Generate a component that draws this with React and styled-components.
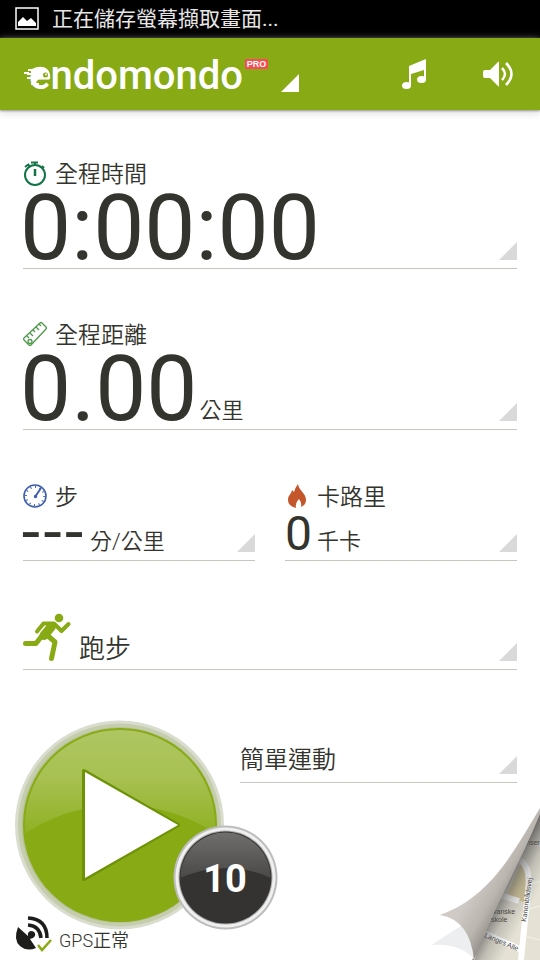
import React from "react";
import styled, { createGlobalStyle } from "styled-components";

const Global = createGlobalStyle`
  * { box-sizing: border-box; }
  html, body, #root { height: 100%; }
  body { margin: 0; background: #fff; color: #33342e; font-family: Roboto, "Noto Sans CJK TC", sans-serif; }
  button { border: 0; padding: 0; margin: 0; background: none; color: inherit; font: inherit; text-align: left; cursor: pointer; }
  svg { display: block; flex: none; overflow: visible; }
`;

const Screen = styled.div`
  position: relative;
  min-height: 100%;
  display: flex;
  flex-direction: column;
  overflow: hidden;
`;

const StatusBar = styled.div`
  height: 38px;
  padding: 0 15px;
  display: flex;
  align-items: center;
  gap: 12px;
  background: #000;
  color: #e6e6e6;
  font-size: 21px;
  line-height: 36px;
`;

const Header = styled.header`
  height: 72px;
  padding: 0 26px 0 22px;
  display: flex;
  align-items: center;
  background: #88aa14;
  box-shadow: 0 1px 2px #999, 0 3px 8px #ddd;
`;

const Brand = styled.button`
  display: flex;
  align-items: flex-end;
  height: 36px;
`;

const Pro = styled.span`
  align-self: flex-start;
  margin-top: 3px;
  width: 23px;
  border-radius: 1px;
  background: #f94b55;
  color: #fff;
  font: bold 9px/10px "Liberation Sans", sans-serif;
  text-align: center;
`;

const Corner = styled.span`
  flex: none;
  width: 18px;
  height: 18px;
  margin-left: ${(p) => p.$gap || "auto"};
  background: ${(p) => p.$color || "#d9d9d9"};
  clip-path: polygon(100% 0, 100% 100%, 0 100%);
`;

const Actions = styled.div`
  margin-left: auto;
  display: flex;
  align-items: center;
  gap: 56px;
`;

const Main = styled.main`
  flex: 1;
  padding: 0 23px;
  display: flex;
  flex-direction: column;
`;

const Pair = styled.div`
  display: grid;
  grid-template-columns: 1fr 1fr;
  gap: 30px;
`;

const Metric = styled.button`
  display: flex;
  flex-direction: column;
  justify-content: flex-end;
  width: 100%;
  height: ${(p) => p.$height};
  border-bottom: 1px solid #c6c6bc;
`;

const Label = styled.span`
  display: flex;
  align-items: flex-start;
  gap: 8px;
  height: 26px;
  font-size: 23px;
  font-weight: 350;
  line-height: 30px;
`;

const Reading = styled.span`
  display: flex;
  align-items: flex-end;
  width: 100%;
  height: ${(p) => p.$height};
  padding-bottom: 8px;
`;

const Value = styled.span`
  font-size: 48px;
  line-height: 36px;
  margin-right: 5px;
`;

const BigValue = styled(Value)`
  font-size: 91px;
  line-height: 64px;
  margin: 0 2px 0 -3px;
`;

const Dashes = styled(Value)`
  font-family: "DejaVu Sans", sans-serif;
  font-size: 60px;
  line-height: 44px;
  margin: 0 5px 0 -3px;
`;

const Unit = styled.span`
  font-size: ${(p) => p.$size || "22px"};
  font-weight: 350;
  line-height: ${(p) => p.$line || "20px"};
`;

const Sport = styled(Unit)`
  margin-left: 8px;
`;

const Footer = styled.div`
  display: flex;
  gap: 16px;
  margin: 50px 0 0 -8px;
`;

const StartArea = styled.div`
  position: relative;
  width: 209px;
`;

const Countdown = styled.button`
  position: absolute;
  left: 158px;
  top: 105px;
  width: 105px;
  height: 105px;
`;

const Gps = styled.div`
  position: relative;
  display: flex;
  align-items: flex-end;
  gap: 7px;
  width: 140px;
  margin: -18px 0 0 -8px;
  font-size: 18px;
  font-weight: 350;
  line-height: 22px;
`;

const MapPeel = styled.button`
  position: absolute;
  right: 0;
  bottom: 0;
`;

const Gallery = () => (
  <svg width="25" height="24" viewBox="0 0 25 24" aria-hidden="true">
    <rect x="1" y="1" width="22" height="21" fill="none" stroke="#fff" strokeWidth="1.5" />
    <path d="M3 19v-4l5-5 4 4 4-3 5 5v3z" fill="#fff" />
  </svg>
);

const Logo = () => (
  <svg width="223" height="36" viewBox="0 0 223 36" role="img" aria-label="endomondo">
    <text x="7" y="33" fill="#fff" fontFamily="Roboto" fontWeight="500" fontSize="40">endomondo</text>
    <path d="M10 13q10-5 16 1 3 4 2 9H17l-3 3h-3l-2-3H5v-2h5v-2H5v-2h4v-2H6v-2z" fill="#fff" />
    <path d="M2 17h5M9 28h8" stroke="#fff" strokeWidth="2" />
    <circle cx="23.500" cy="19" r="2.500" fill="#88aa14" />
    <circle cx="24" cy="18.500" r="1" fill="#fff" />
  </svg>
);

const Music = () => (
  <svg width="25" height="32" viewBox="0 0 25 32" aria-hidden="true">
    <path d="M7 8L24 1v21h-2V12L9 16v12H7z" fill="#fff" />
    <ellipse cx="4.500" cy="27.500" rx="4.500" ry="3.500" fill="#fff" />
    <ellipse cx="19.500" cy="21.500" rx="4.500" ry="3.500" fill="#fff" />
  </svg>
);

const Speaker = () => (
  <svg width="31" height="26" viewBox="0 0 31 26" aria-hidden="true">
    <path d="M2 9h5l8-8q1-1 1 0v24q0 1-1 0l-8-8H2q-2 0-2-2v-4q0-2 2-2z" fill="#fff" />
    <path d="M19 7q6 6 0 12M23 2q11 11 0 22" fill="none" stroke="#fff" strokeWidth="2.500" />
  </svg>
);

const Stopwatch = () => (
  <svg width="24" height="26" viewBox="0 0 24 26" aria-hidden="true" fill="none" stroke="#127447">
    <circle cx="12" cy="15" r="10" strokeWidth="2" />
    <path d="M8 2.500h7M12 3v3M2 7l4-3M5 4l2 3M19 6l2 2" strokeWidth="2" />
    <path d="M12 9v7" strokeWidth="2.500" />
  </svg>
);

const Ruler = () => (
  <svg width="24" height="26" viewBox="0 0 24 26" aria-hidden="true" fill="none" stroke="#4b9948" strokeWidth="1.3">
    <path d="M1 17L17 2q1-1 2 0l4 4q1 1 0 2L8 24q-1 1-2 0l-5-5q-1-1 0-2z" />
    <circle cx="7" cy="20.500" r="2" />
    <path d="M4 15l2 2M7 12l3 3M10 9l2 2M13 6l3 3M16 3l2 2" />
  </svg>
);

const Gauge = () => (
  <svg width="24" height="26" viewBox="0 -1 24 26" aria-hidden="true" fill="none" stroke="#3f5fae">
    <circle cx="12" cy="12" r="11" strokeWidth="1.6" />
    <circle cx="12" cy="12" r="9" strokeWidth="2" strokeDasharray="1 3.7" pathLength="56.4" />
    <path d="M12 13L18 4" strokeWidth="2" />
    <circle cx="12.500" cy="12.500" r="1" strokeWidth="1.500" />
  </svg>
);

const Flame = () => (
  <svg width="24" height="26" viewBox="0 -1 24 26" aria-hidden="true">
    <path d="M13 0C14 7 21 9 21 16q0 5-5 7 1-4-2-8-4 4-3 9-8-2-8-8c0-5 3-5 4-10l2 2q1-4 4-8z" fill="#c3562b" />
  </svg>
);

const Runner = () => (
  <svg width="48" height="48" viewBox="0 0 48 48" aria-hidden="true">
    <circle cx="36" cy="5" r="4.300" fill="#88aa14" />
    <g fill="none" stroke="#88aa14" strokeWidth="5" strokeLinecap="round" strokeLinejoin="round">
      <path d="M14 18.500L20.500 10.500H31L38.500 18 45.500 11" strokeWidth="4" />
      <path d="M18 24L13 30.500H2.500" />
      <path d="M24 22L32 29 28.500 45.500" />
      <path d="M28.500 13.500L21 22.500" strokeWidth="9" />
    </g>
  </svg>
);

const PlayArt = () => (
  <svg width="209" height="210" viewBox="0 0 209 210" aria-hidden="true">
    <defs>
      <linearGradient id="shine" x2="0" y2="1">
        <stop stopColor="#b0c767" /><stop offset=".5" stopColor="#a8c152" /><stop offset="1" stopColor="#8fb022" />
      </linearGradient>
      <clipPath id="disc"><circle cx="105" cy="105" r="95" /></clipPath>
    </defs>
    <circle cx="104.500" cy="105" r="104.500" fill="#d9ddcd" />
    <circle cx="104.500" cy="105" r="101.500" fill="#c5cdae" />
    <circle cx="104.500" cy="105" r="98" fill="#b6c394" />
    <circle cx="105" cy="105" r="97" fill="#88aa14" />
    <path d="M8 115V0h195v115q-45-30-98-30T8 115z" fill="url(#shine)" clipPath="url(#disc)" />
    <path d="M69 51v108l94-54z" fill="#fff" stroke="#6d9206" strokeWidth="4" strokeLinejoin="round" />
    <path d="M70 52v106l93-53z" fill="#fff" />
  </svg>
);

const CountArt = () => (
  <svg width="105" height="105" viewBox="0 0 105 105">
    <defs>
      <linearGradient id="gloss" x2="0" y2="1">
        <stop stopColor="#777573" /><stop offset="1" stopColor="#4a4846" />
      </linearGradient>
      <clipPath id="dial"><circle cx="52.500" cy="52.500" r="45" /></clipPath>
    </defs>
    <circle cx="52.500" cy="52.500" r="52" fill="#bdbdbd" />
    <circle cx="52.500" cy="52.500" r="50" fill="#f0f0f0" />
    <circle cx="52.500" cy="52.500" r="47" fill="#aaa" />
    <circle cx="52.500" cy="52.500" r="46" fill="#353331" />
    <path d="M5 54V0h95v54q-46-22-95 0z" fill="url(#gloss)" clipPath="url(#dial)" />
    <text x="52" y="67" textAnchor="middle" fontFamily="Roboto" fontWeight="700" fontSize="38" fill="#fff">10</text>
  </svg>
);

const Satellite = () => (
  <svg width="37" height="36" viewBox="0 0 37 36" aria-hidden="true">
    <path d="M3 11l10 9q-1-5 4-5 4 1 3 5-2 3-5 3l6 9q-9 4-16-2T3 11z" fill="#1d1d1b" />
    <path d="M13 9q12 1 13 13M13 2q19 1 19 20" fill="none" stroke="#1d1d1b" strokeWidth="3.500" />
    <path d="M23 29l4 5 9-10" fill="none" stroke="#fff" strokeWidth="5" />
    <path d="M23 29l4 5 9-10" fill="none" stroke="#88aa14" strokeWidth="2.500" />
  </svg>
);

const PeelArt = () => (
  <svg width="110" height="152" viewBox="0 0 110 152">
    <defs>
      <linearGradient id="fold" gradientUnits="userSpaceOnUse" x1="42" y1="82" x2="80" y2="104">
        <stop stopColor="#cfcac5" /><stop offset=".5" stopColor="#bbb5af" /><stop offset="1" stopColor="#827e79" />
      </linearGradient>
      <linearGradient id="shade" gradientUnits="userSpaceOnUse" x1="76" y1="72" x2="106" y2="88">
        <stop stopColor="#444" stopOpacity=".75" /><stop offset=".5" stopColor="#555" stopOpacity=".25" /><stop offset="1" stopColor="#555" stopOpacity="0" />
      </linearGradient>
      <clipPath id="map"><path d="M110 4L42 152h68z" /></clipPath>
    </defs>
    <g clipPath="url(#map)">
      <path d="M30 0h80v152H30z" fill="#e5e2d5" />
      <path d="M91 55l10 14-6 26-18-8z" fill="#d5c99c" />
      <path d="M70 87l19 6M90 52q11 7 8 30l-8 80M54 125l40 18" fill="none" stroke="#fff" strokeWidth="6" />
      <path d="M97 77l13-4M96 102l14-4M95 128l15 4M92 35l18 3" stroke="#f4f2e9" />
      <g fill="#45423d" fontFamily="Liberation Sans" fontSize="7">
        <text x="96" y="37">nser</text>
        <text x="63" y="106">vanske</text>
        <text x="61" y="114">skole</text>
        <text x="54" y="129" transform="rotate(23 54 129)">Langes Alle</text>
        <text x="96" y="114" transform="rotate(-82 96 114)">Kanonbådsvej</text>
      </g>
      <path d="M110 0L42 152h68z" fill="url(#shade)" />
    </g>
    <path d="M2 137q17-12 31-20 15 15 12 35-15-17-43-15z" fill="#eceeef" />
    <path d="M110 0C83 45 60 89 10 107q30 5 34 45C62 103 91 54 110 6z" fill="url(#fold)" />
  </svg>
);

export default function App() {
  return (
    <Screen>
      <Global />
      <StatusBar><Gallery /><span>正在儲存螢幕擷取畫面...</span></StatusBar>
      <Header>
        <Brand>
          <Logo /><Pro>PRO</Pro><Corner $color="#fff" $gap="13px" />
        </Brand>
        <Actions>
          <button aria-label="Music"><Music /></button>
          <button aria-label="Sound"><Speaker /></button>
        </Actions>
      </Header>
      <Main>
        <Metric $height="159px">
          <Label><Stopwatch />全程時間</Label>
          <Reading $height="82px"><BigValue>0:00:00</BigValue><Corner /></Reading>
        </Metric>
        <Metric $height="161px">
          <Label><Ruler />全程距離</Label>
          <Reading $height="82px"><BigValue>0.00</BigValue><Unit>公里</Unit><Corner /></Reading>
        </Metric>
        <Pair>
          <Metric $height="131px">
            <Label><Gauge />步</Label>
            <Reading $height="51px"><Dashes>---</Dashes><Unit>分/公里</Unit><Corner /></Reading>
          </Metric>
          <Metric $height="131px">
            <Label><Flame />卡路里</Label>
            <Reading $height="51px"><Value>0</Value><Unit>千卡</Unit><Corner /></Reading>
          </Metric>
        </Pair>
        <Metric $height="109px">
          <Reading $height="57px"><Runner /><Sport $size="26px" $line="24px">跑步</Sport><Corner /></Reading>
        </Metric>
        <Footer>
          <StartArea>
            <button aria-label="Start"><PlayArt /></button>
            <Countdown><CountArt /></Countdown>
          </StartArea>
          <Metric $height="63px">
            <Reading $height="40px"><Unit $size="24px" $line="28px">簡單運動</Unit><Corner /></Reading>
          </Metric>
        </Footer>
        <Gps><Satellite />GPS正常</Gps>
      </Main>
      <MapPeel aria-label="Map"><PeelArt /></MapPeel>
    </Screen>
  );
}
